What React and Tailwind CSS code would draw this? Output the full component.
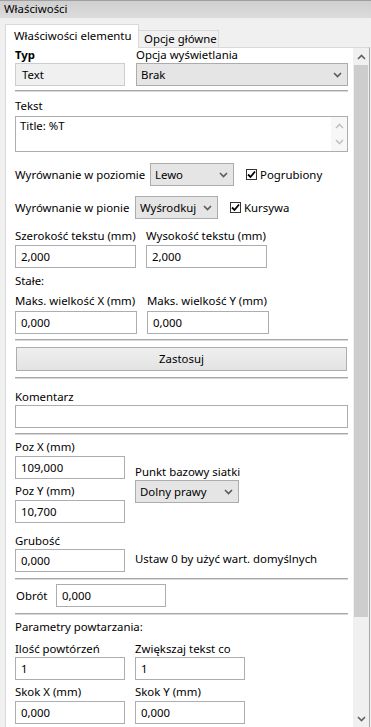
import React from "react";

const Chevron = ({ c = "#5a5a5a", up = false }) => (
  <svg width="9" height="6" viewBox="0 0 9 6" className="shrink-0">
    <polyline
      points={up ? "1,5 4.5,1.5 8,5" : "1,1 4.5,4.5 8,1"}
      fill="none"
      stroke={c}
      strokeWidth="1.6"
    />
  </svg>
);

const Label = ({ children, className = "" }) => (
  <div className={"h-[14px] leading-[14px] text-[11.4px] whitespace-nowrap text-black " + className}>
    {children}
  </div>
);

const Input = ({ value, className = "" }) => (
  <div
    className={
      "h-[23px] border border-[#abadb3] bg-white pl-[5px] flex items-center text-[11.4px] leading-none text-black " +
      className
    }
  >
    {value}
  </div>
);

const Select = ({ value, className = "" }) => (
  <div
    className={
      "h-[23px] border border-[#acacac] bg-[#e5e5e5] pl-[4px] pr-[5px] flex items-center justify-between text-[11.4px] leading-none text-black " +
      className
    }
  >
    <span className="whitespace-nowrap">{value}</span>
    <Chevron />
  </div>
);

const Check = ({ label }) => (
  <div className="flex items-center gap-[3px] text-[11.4px] leading-none whitespace-nowrap">
    <div className="w-[11px] h-[11px] border border-[#333333] bg-white flex items-center justify-center">
      <svg width="9" height="9" viewBox="0 0 9 9">
        <polyline points="1,4.5 3.5,7 8,1.5" fill="none" stroke="#000" strokeWidth="1.8" />
      </svg>
    </div>
    <span>{label}</span>
  </div>
);

const Sep = ({ className = "" }) => (
  <div className={"h-[2px] border-t border-[#a8a8a8] border-b border-b-[#d8d8d8] " + className} />
);

export default function App() {
  return (
    <div className="w-[371px] h-[727px] overflow-hidden bg-[#f0f0f0] font-['Noto_Sans',sans-serif] text-black flex flex-col">
      {/* Header */}
      <div className="h-[18px] shrink-0 border-t border-[#a0a0a0] bg-gradient-to-b from-[#cfcfcf] to-[#dcdcdc] pl-[4px] text-[11.4px] leading-[16px]">
        Właściwości
      </div>

      {/* Tabs */}
      <div className="pt-[6px] pl-[5px] flex items-end shrink-0 relative z-10">
        <div className="h-[24px] w-[134px] bg-white border border-[#d9d9d9] border-b-0 pl-[8px] pt-[4px] text-[11.4px] leading-[14px] whitespace-nowrap -mb-px">
          Właściwości elementu
        </div>
        <div className="h-[17px] w-[80px] bg-[#f0f0f0] border border-[#d9d9d9] border-l-0 border-b-0 pl-[5px] text-[11.4px] leading-[16px] whitespace-nowrap">
          Opcje główne
        </div>
      </div>

      {/* Panel */}
      <div className="ml-[5px] mr-[1px] flex-1 border border-[#d9d9d9] border-r-[#a8a8a8] border-b-0 bg-white flex min-h-0">
        <div className="flex-1 overflow-hidden pl-[9px] pr-[5px]">
          {/* Row 1 */}
          <div className="flex gap-[11px]">
            <div className="w-[110px]">
              <Label className="font-bold">Typ</Label>
              <div className="mt-[1px] h-[23px] border border-[#cdcdcd] bg-[#f0f0f0] pl-[6px] flex items-center text-[11.4px] leading-none">
                Text
              </div>
            </div>
            <div className="flex-1">
              <Label>Opcja wyświetlania</Label>
              <Select value="Brak" className="mt-[1px]" />
            </div>
          </div>
          <Sep className="mt-[4px]" />

          <Label className="mt-[7px]">Tekst</Label>
          <div className="mt-[3px] h-[36px] border border-[#abadb3] bg-white flex">
            <div className="flex-1 pl-[4px] pt-[2px] text-[11.4px] leading-[14px]">Title: %T</div>
            <div className="w-[16px] bg-[#f7f7f7] flex flex-col items-center justify-between py-[6px]">
              <Chevron c="#c2c2c2" up />
              <Chevron c="#c2c2c2" />
            </div>
          </div>

          <div className="mt-[11px] flex items-center">
            <span className="text-[11.4px] leading-none w-[135px] whitespace-nowrap">Wyrównanie w poziomie</span>
            <Select value="Lewo" className="w-[84px]" />
            <div className="ml-[12px]">
              <Check label="Pogrubiony" />
            </div>
          </div>
          <div className="mt-[10px] flex items-center">
            <span className="text-[11.4px] leading-none w-[120px] whitespace-nowrap">Wyrównanie w pionie</span>
            <Select value="Wyśrodkuj" className="w-[83px]" />
            <div className="ml-[12px]">
              <Check label="Kursywa" />
            </div>
          </div>

          <div className="mt-[10px] flex gap-[10px]">
            <div className="w-[121px]">
              <Label>Szerokość tekstu (mm)</Label>
              <Input value="2,000" className="mt-[2px]" />
            </div>
            <div className="w-[121px]">
              <Label>Wysokość tekstu (mm)</Label>
              <Input value="2,000" className="mt-[2px]" />
            </div>
          </div>

          <Label className="mt-[6px]">Stałe:</Label>
          <div className="mt-[6px] flex gap-[10px]">
            <div className="w-[122px]">
              <Label>Maks. wielkość X (mm)</Label>
              <Input value="0,000" className="mt-[3px] h-[22px]" />
            </div>
            <div className="w-[122px]">
              <Label>Maks. wielkość Y (mm)</Label>
              <Input value="0,000" className="mt-[3px] h-[22px]" />
            </div>
          </div>
          <Sep className="mt-[5px]" />

          <div className="mt-[6px] ml-[1px] mr-[1px] h-[24px] border border-[#adadad] bg-gradient-to-b from-[#efefef] to-[#e3e3e3] flex items-center justify-center text-[11.4px] leading-none">
            Zastosuj
          </div>
          <Sep className="mt-[6px]" />

          <Label className="mt-[11px]">Komentarz</Label>
          <Input value="" className="mt-[1px]" />
          <Sep className="mt-[5px]" />

          <div className="mt-[5px] flex gap-[10px]">
            <div className="w-[110px]">
              <Label>Poz X (mm)</Label>
              <Input value="109,000" className="mt-[2px]" />
              <Label className="mt-[5px]">Poz Y (mm)</Label>
              <Input value="10,700" className="mt-[2px]" />
            </div>
            <div className="w-[104px]">
              <Label className="mt-[25px]">Punkt bazowy siatki</Label>
              <Select value="Dolny prawy" className="mt-[1px] h-[22px]" />
            </div>
          </div>

          <div className="mt-[11px] flex">
            <div className="w-[110px]">
              <Label>Grubość</Label>
              <Input value="0,000" className="mt-[1px]" />
            </div>
            <div className="ml-[10px] flex-1 flex items-end pb-[6px]">
              <span className="text-[11.4px] leading-[14px] whitespace-nowrap">Ustaw 0 by użyć wart. domyślnych</span>
            </div>
          </div>
          <Sep className="mt-[6px]" />

          <div className="mt-[4px] flex items-center">
            <span className="ml-[1px] w-[40px] text-[11.4px] leading-none">Obrót</span>
            <Input value="0,000" className="w-[110px]" />
          </div>
          <Sep className="mt-[6px]" />

          <Label className="mt-[5px]">Parametry powtarzania:</Label>
          <div className="mt-[8px] flex gap-[10px]">
            <div className="w-[110px]">
              <Label>Ilość powtórzeń</Label>
              <Input value="1" className="mt-[1px]" />
              <Label className="mt-[5px]">Skok X (mm)</Label>
              <Input value="0,000" className="mt-[2px]" />
            </div>
            <div className="w-[110px]">
              <Label>Zwiększaj tekst co</Label>
              <Input value="1" className="mt-[1px]" />
              <Label className="mt-[5px]">Skok Y (mm)</Label>
              <Input value="0,000" className="mt-[2px]" />
            </div>
          </div>
        </div>

        {/* Scrollbar */}
        <div className="w-[16px] shrink-0 bg-[#f0f0f0] flex flex-col">
          <div className="h-[17px] flex items-center justify-center">
            <Chevron c="#606060" up />
          </div>
          <div className="h-[552px] mx-[1px] bg-[#cdcdcd]" />
          <div className="flex-1" />
          <div className="h-[14px] flex items-start justify-center pt-[3px]">
            <Chevron c="#606060" />
          </div>
        </div>
      </div>
    </div>
  );
}
